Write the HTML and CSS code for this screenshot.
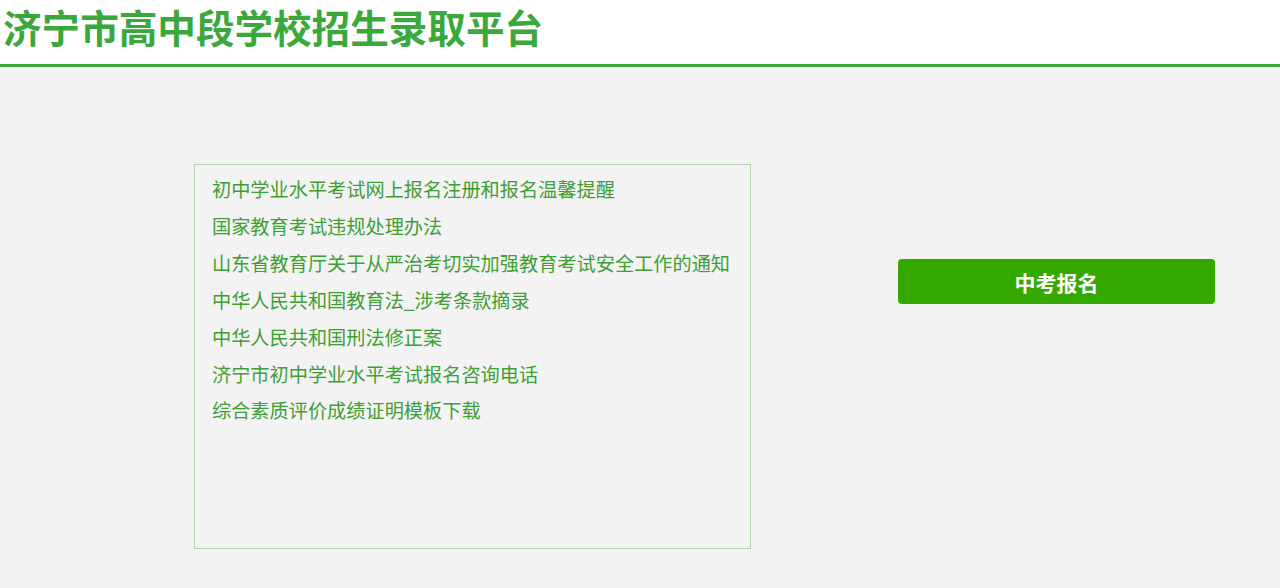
FILE: index.html
```html
<!DOCTYPE html>
<html lang="zh-CN">
<head>
<meta charset="utf-8">
<title>济宁市高中段学校招生录取平台</title>
<link rel="stylesheet" href="styles.css">
</head>
<body>
<header class="header">
  <h1 class="title">济宁市高中段学校招生录取平台</h1>
</header>
<main class="main">
  <section class="notice-box">
    <ul class="notice-list">
      <li><a href="#">初中学业水平考试网上报名注册和报名温馨提醒</a></li>
      <li><a href="#">国家教育考试违规处理办法</a></li>
      <li><a href="#">山东省教育厅关于从严治考切实加强教育考试安全工作的通知</a></li>
      <li><a href="#">中华人民共和国教育法_涉考条款摘录</a></li>
      <li><a href="#">中华人民共和国刑法修正案</a></li>
      <li><a href="#">济宁市初中学业水平考试报名咨询电话</a></li>
      <li><a href="#">综合素质评价成绩证明模板下载</a></li>
    </ul>
  </section>
  <div class="action">
    <a class="btn" href="#">中考报名</a>
  </div>
</main>
</body>
</html>
```
FILE: styles.css
```css
* { box-sizing: border-box; }
html, body {
  margin: 0;
  padding: 0;
}
body {
  background: #f3f3f3;
  font-family: "Noto Sans CJK SC", "Noto Sans", sans-serif;
  height: 588px;
  overflow: hidden;
}
.header {
  background: #ffffff;
  height: 67px;
  border-bottom: 3px solid #3aa83a;
  padding-left: 3px;
}
.title {
  margin: 0;
  font-size: 38.6px;
  line-height: 52px;
  font-weight: 700;
  color: #3aa83a;
  letter-spacing: 0;
}
.main {
  display: flex;
  align-items: flex-start;
  padding: 97px 0 0 194px;
}
.notice-box {
  width: 557px;
  height: 385px;
  border: 1px solid #b3d6a8;
  padding: 6px 0 0 17px;
}
.notice-list {
  list-style: none;
  margin: 0;
  padding: 0;
}
.notice-list li {
  font-size: 19.2px;
  line-height: 36.9px;
  white-space: nowrap;
}
.notice-list a {
  color: #3f9f33;
  text-decoration: none;
}
.action {
  margin-left: 147px;
  padding-top: 95px;
}
.btn {
  display: flex;
  align-items: center;
  justify-content: center;
  width: 317px;
  height: 45px;
  background: #35a800;
  border-radius: 4px;
  color: #ffffff;
  font-size: 21px;
  font-weight: 700;
  text-decoration: none;
}
```
